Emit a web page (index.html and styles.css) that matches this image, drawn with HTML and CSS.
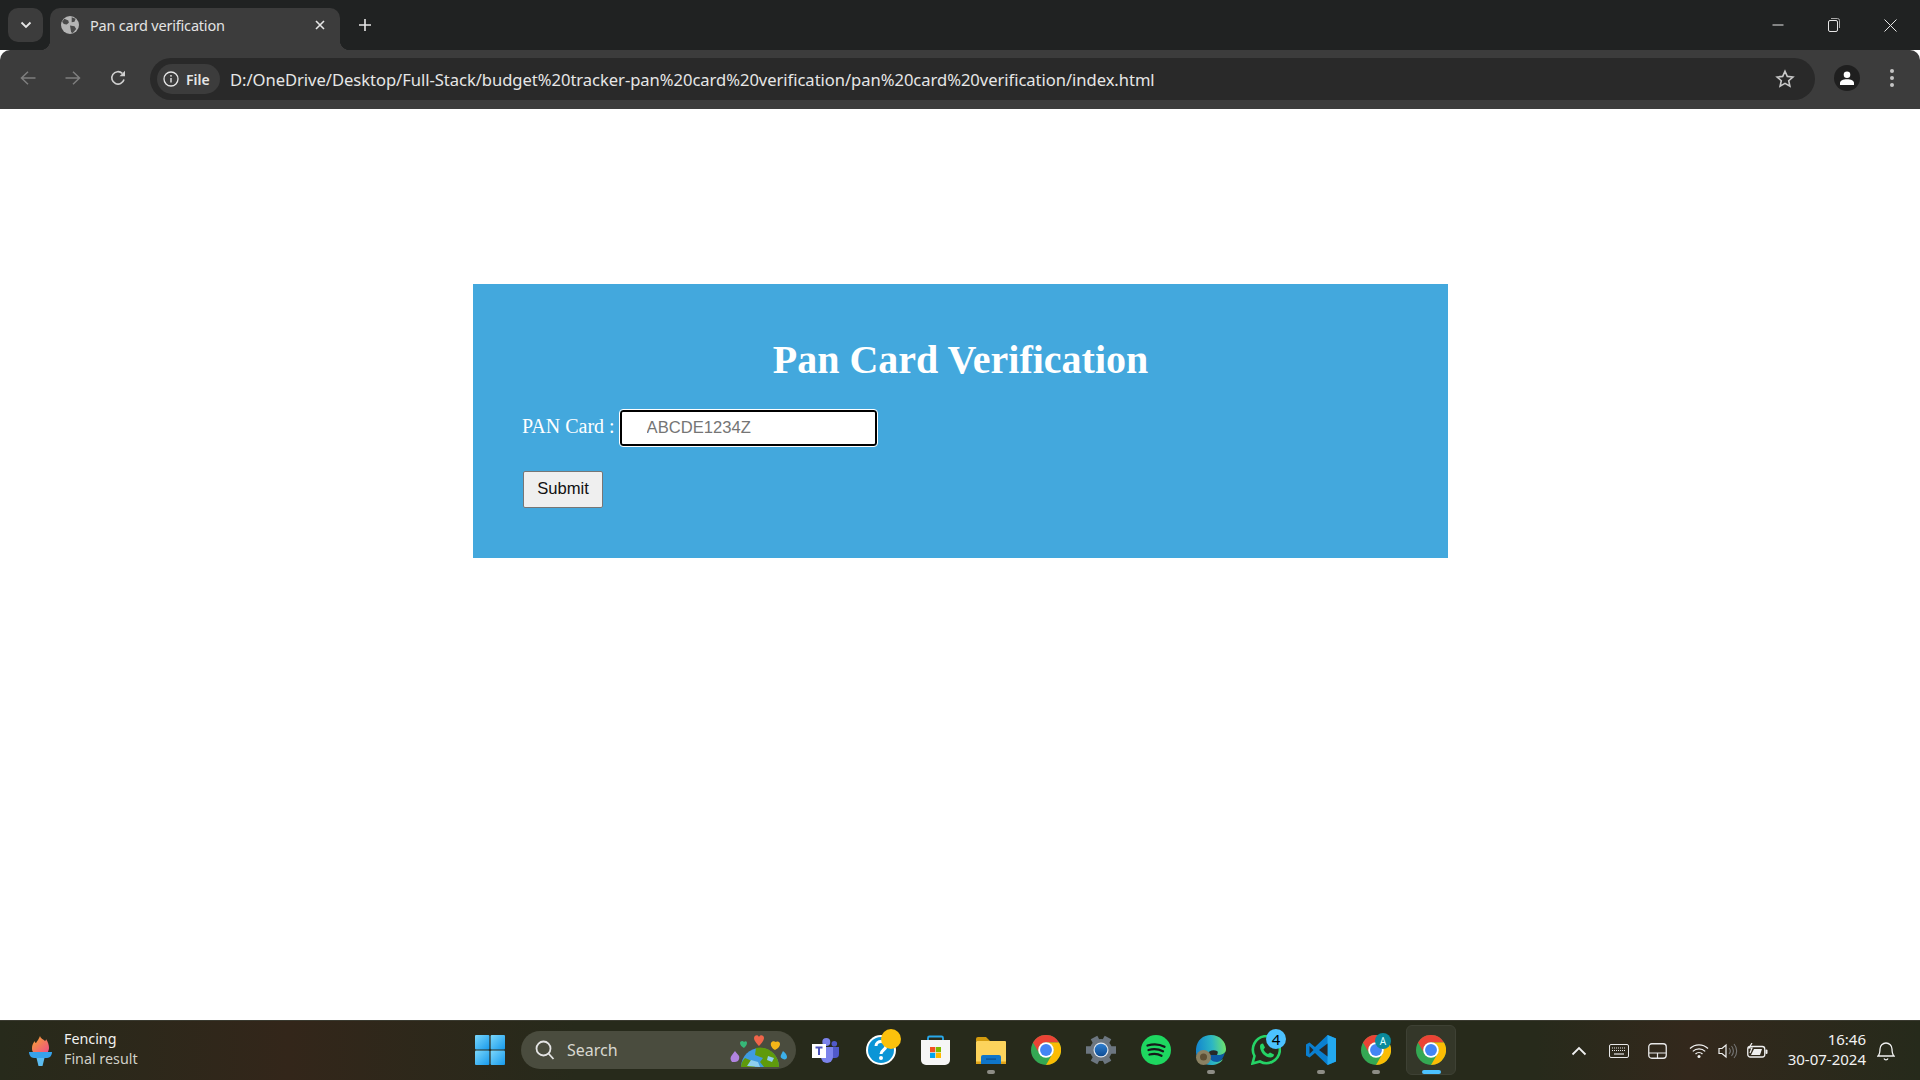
FILE: index.html
```html
<!DOCTYPE html>
<html lang="en">
<head>
<meta charset="utf-8">
<title>Pan card verification</title>
<link rel="stylesheet" href="styles.css">
</head>
<body>
<svg class="defs" width="0" height="0" aria-hidden="true">
  <defs>
    <linearGradient id="flame" x1="0" y1="0" x2="1" y2="1"><stop offset="0" stop-color="#f7a92c"/><stop offset="1" stop-color="#ef4f86"/></linearGradient>
    <linearGradient id="edgeg" x1="0" y1="0.5" x2="1" y2="0.4"><stop offset="0" stop-color="#1283cf"/><stop offset=".55" stop-color="#2cb6c4"/><stop offset="1" stop-color="#6ee46c"/></linearGradient>
    <linearGradient id="winl" x1="0" y1="0" x2="1" y2="1"><stop offset="0" stop-color="#7bd7fb"/><stop offset="1" stop-color="#179aed"/></linearGradient>
    <linearGradient id="hub" x1="0" y1="0" x2="0" y2="1"><stop offset="0" stop-color="#2f7fd0"/><stop offset="1" stop-color="#0d4c94"/></linearGradient>
  </defs>
  <symbol id="chrome" viewBox="0 0 48 48">
    <circle cx="24" cy="24" r="24" fill="#34a853"/>
    <path d="M3.200 12A24 24 0 0 1 44.800 12H24A12 12 0 0 0 13.600 30z" fill="#ea4335"/>
    <path d="M44.800 12A24 24 0 0 1 24 48L34.400 30A12 12 0 0 0 24 12z" fill="#fbbc04"/>
    <circle cx="24" cy="24" r="12.500" fill="#fff"/>
    <circle cx="24" cy="24" r="9.500" fill="#4285f4"/>
  </symbol>
</svg>

<header class="tabstrip">
  <button class="tab-menu" type="button">
    <svg width="12" height="12" viewBox="0 0 12 12"><path d="M1.500 3.500 6 8l4.500-4.500" fill="none" stroke="#e6e6e6" stroke-width="1.800"/></svg>
  </button>
  <div class="tab">
    <svg class="tab-globe" width="18" height="18" viewBox="0 0 16 16"><circle cx="8" cy="8" r="8" fill="#b5b5b5"/><path d="M3 2.500 6.500 4 7 6 5 7.500 2.500 7 1 5zM9.500 1 13 2.500 12 5l-2.500.5zM8 8.500l4 .5 1.500 2.500-3 3.500-1.500-.5-.5-3z" fill="#4a4a4a"/></svg>
    <span class="tab-title">Pan card verification</span>
    <svg class="tab-close" width="12" height="12" viewBox="0 0 12 12"><path d="M2 2l8 8M10 2l-8 8" stroke="#e6e6e6" stroke-width="1.600"/></svg>
  </div>
  <svg class="tab-new" width="14" height="14" viewBox="0 0 14 14"><path d="M7 1v12M1 7h12" stroke="#e6e6e6" stroke-width="1.600"/></svg>
  <div class="window-controls">
    <svg width="12" height="12" viewBox="0 0 12 12"><path d="M.5 6h11" stroke="#e6e6e6"/></svg>
    <svg width="12" height="14" viewBox="0 0 12 14"><rect x=".5" y="2.500" width="9" height="11" rx="1.500" fill="none" stroke="#e6e6e6"/><path d="M3 .5h6.500a2 2 0 0 1 2 2V10" fill="none" stroke="#a8a8a8"/></svg>
    <svg width="13" height="13" viewBox="0 0 13 13"><path d="M.5.500l12 12M12.500.500l-12 12" stroke="#e6e6e6"/></svg>
  </div>
</header>

<nav class="toolbar">
  <svg class="nav-icon" width="16" height="16" viewBox="0 0 16 16"><path d="M15.500 8H1.500M8 1.800 1.500 8 8 14.200" fill="none" stroke="#7e7e7e" stroke-width="1.500"/></svg>
  <svg class="nav-icon" width="16" height="16" viewBox="0 0 16 16"><path d="M.5 8h14M8 1.800 14.500 8 8 14.200" fill="none" stroke="#7e7e7e" stroke-width="1.500"/></svg>
  <svg class="nav-icon" width="16" height="16" viewBox="0 0 16 16"><path d="M14 9.500A6.200 6.200 0 1 1 12.300 3.400" fill="none" stroke="#d0d0d0" stroke-width="1.600"/><path d="M15 .8v5.500H9.500z" fill="#d0d0d0"/></svg>
  <div class="omnibox">
    <div class="chip">
      <svg width="16" height="16" viewBox="0 0 16 16"><circle cx="8" cy="8" r="7" fill="none" stroke="#e6e6e6" stroke-width="1.300"/><path d="M8 7v4.500" stroke="#e6e6e6" stroke-width="1.400"/><circle cx="8" cy="4.800" r=".9" fill="#e6e6e6"/></svg>
      <span class="chip-label">File</span>
    </div>
    <span class="url">D:/OneDrive/Desktop/Full-Stack/budget%20tracker-pan%20card%20verification/pan%20card%20verification/index.html</span>
    <svg class="star" width="20" height="20" viewBox="0 0 20 20"><path d="M10 2.200l2.300 5.200 5.600.6-4.200 3.700 1.200 5.500L10 14.400 5.100 17.200l1.200-5.500L2.100 8l5.600-.6z" fill="none" stroke="#c8c8c8" stroke-width="1.600"/></svg>
  </div>
  <div class="avatar">
    <svg width="14" height="14" viewBox="0 0 14 14"><circle cx="7" cy="3.800" r="3.300" fill="#fff"/><path d="M0 14v-2c0-2.500 3-3.800 7-3.800s7 1.300 7 3.800v2z" fill="#fff"/></svg>
  </div>
  <div class="kebab"><i></i><i></i><i></i></div>
</nav>

<main class="page">
  <section class="card">
    <h1 class="card-title">Pan Card Verification</h1>
    <form class="card-form">
      <div class="field">
        <label class="field-label" for="pan">PAN Card :</label>
        <input class="field-input" id="pan" type="text" placeholder="ABCDE1234Z">
      </div>
      <button class="submit" type="button">Submit</button>
    </form>
  </section>
</main>

<footer class="taskbar">
  <div class="widget">
    <svg width="23" height="30" viewBox="0 0 23 30">
      <path d="M11 0c1 3 3 3 5 5 1-1 1-1 1-2 2 3 3 6 3 9 0 2-1 3-1 4H4c-1-1-1-3-1-4 0-3 1-5 3-7 0 1 0 2 1 2 1-2 3-4 4-7z" fill="url(#flame)"/>
      <path d="M0 16h23c0 3-2 6-5 6H5c-3 0-5-3-5-6z" fill="#36a2ec"/>
      <path d="M7.500 22h8L13.500 30h-4z" fill="#5cbcf0"/>
    </svg>
    <div class="widget-text"><span class="widget-title">Fencing</span><span class="widget-sub">Final result</span></div>
  </div>
  <div class="center">
    <div class="slot slot-win">
      <svg width="30" height="30" viewBox="0 0 30 30"><rect x="0" y="0" width="14.400" height="14.400" rx="1" fill="url(#winl)"/><rect x="15.600" y="0" width="14.400" height="14.400" rx="1" fill="url(#winl)"/><rect x="0" y="15.600" width="14.400" height="14.400" rx="1" fill="url(#winl)"/><rect x="15.600" y="15.600" width="14.400" height="14.400" rx="1" fill="url(#winl)"/></svg>
    </div>
    <div class="search">
      <svg width="22" height="22" viewBox="0 0 22 22"><circle cx="9.500" cy="9.500" r="7" fill="none" stroke="#e4e4e4" stroke-width="1.800"/><path d="M14.500 14.500l5 5.500" stroke="#e4e4e4" stroke-width="1.800"/></svg>
      <span class="search-text">Search</span>
      <svg class="search-art" width="60" height="36" viewBox="0 0 60 36">
        <path d="M11 34a19 19 0 0 1 38 0z" fill="#3f9be0"/>
        <path d="M26 15a19 19 0 0 1 23 19H34l-4-5 3-4-8-3zM11 34c0-4 2-7 4-9l7 3 3 6z" fill="#5f9a0c"/>
        <path d="M17 33l4-6 7 2 2 5zM38 23l6 2-2 4-5-2z" fill="#8fd0f0"/>
        <path d="M29 13c-1-1-5-5-5-8 0-3 4-4 5-1 1-3 5-2 5 1 0 3-4 7-5 8z" fill="#f0654a"/>
        <path d="M14 15c-2-1-4-3-4-5 0-2 3-3 4-1 1-1 3-1 3 1 0 2-2 4-3 5z" fill="#37b878"/>
        <path d="M45 17c-2-1-5-4-4-7 1-2 3-2 5-1 2-1 4 0 4 2 0 3-3 5-5 6z" fill="#f5b618"/>
        <path d="M2 29c-2-2-2-5 0-7l3-4c1 2 3 3 4 5 1 3-1 6-4 6z" fill="#b184e0"/>
        <path d="M53 18c1 1 4 3 4 6 0 2-2 3-4 2s-3-2-2-4z" fill="#3cb0ea"/>
      </svg>
    </div>
    <div class="apps">
      <div class="slot">
        <svg width="28" height="25" viewBox="0 0 28 25"><circle cx="14.300" cy="4" r="4" fill="#7b83eb"/><circle cx="22.300" cy="5.700" r="2.800" fill="#5059c9"/><path d="M19 9h8v7a4 4 0 0 1-4 4h-4z" fill="#5059c9"/><path d="M9 9h12v10a5.500 5.500 0 0 1-12 0z" fill="#7b83eb"/><rect x="0" y="6" width="14" height="14" fill="#fff"/><path d="M3.500 9.500h7M7 9.500V17" stroke="#4b53bc" stroke-width="2"/></svg>
      </div>
      <div class="slot">
        <svg width="30" height="30" viewBox="0 0 30 30"><circle cx="15" cy="15" r="15" fill="#fff"/><circle cx="15" cy="15" r="13" fill="#0b95d6"/><path d="M10 11c0-6 10-6 10 0 0 4-5 4-5 8" fill="none" stroke="#fff" stroke-width="3"/><circle cx="15" cy="23" r="2" fill="#fff"/></svg>
        <span class="badge badge-amber"></span>
      </div>
      <div class="slot">
        <svg width="29" height="30" viewBox="0 0 29 30"><path d="M7 6V3a1.500 1.500 0 0 1 1.500-1.500h12A1.500 1.500 0 0 1 22 3v3" fill="none" stroke="#28a8ea" stroke-width="1.800"/><path d="M0 5h29v20a5 5 0 0 1-5 5H5a5 5 0 0 1-5-5z" fill="#f6f6f6"/><rect x="9" y="12" width="5.200" height="5.200" fill="#f25022"/><rect x="14.800" y="12" width="5.200" height="5.200" fill="#7fba00"/><rect x="9" y="17.800" width="5.200" height="5.200" fill="#00a4ef"/><rect x="14.800" y="17.800" width="5.200" height="5.200" fill="#ffb900"/></svg>
      </div>
      <div class="slot slot-open">
        <svg width="30" height="27" viewBox="0 0 30 27"><path d="M0 2a2 2 0 0 1 2-2h8l4 4H0z" fill="#d39b0e"/><rect x="0" y="4" width="30" height="23" rx="1" fill="#fcd35c"/><rect x="0" y="24.500" width="30" height="2.500" fill="#e0a318"/><path d="M5 20a2 2 0 0 1 2-2h16a2 2 0 0 1 2 2v7H5z" fill="#0f75c9"/><rect x="10" y="21.500" width="10" height="1.200" fill="#0a4f8f"/></svg>
      </div>
      <div class="slot"><svg width="30" height="30"><use href="#chrome"/></svg></div>
      <div class="slot">
        <svg width="30" height="30" viewBox="0 0 30 30">
          <g stroke="#6c7680" stroke-width="7.500">
            <path d="M15 15H30"/><path d="M15 15H0"/>
            <path d="M15 15 22 2.500"/><path d="M15 15 8 2.500"/>
            <path d="M15 15 22 27.500"/><path d="M15 15 8 27.500"/>
          </g>
          <circle cx="15" cy="15" r="11" fill="#6c7680"/>
          <circle cx="15" cy="15" r="7.500" fill="#dfe6ee"/>
          <circle cx="15" cy="15" r="6.300" fill="url(#hub)"/>
        </svg>
      </div>
      <div class="slot">
        <svg width="30" height="30" viewBox="0 0 30 30"><circle cx="15" cy="15" r="15" fill="#1ed760"/><path d="M6.500 10.500c6-1.800 12-1.400 17 1.300M7.500 15c5-1.400 10-1 14.500 1.300M8.500 19.500c4-1 8.500-.8 12 1.200" fill="none" stroke="#16181a" stroke-width="2.300" stroke-linecap="round"/></svg>
      </div>
      <div class="slot slot-open">
        <svg width="30" height="30" viewBox="0 0 30 30"><path d="M0 14C1 5 7 0 15 0c9 0 15 7 15 14 0 4-3 6-7 6H13c0 4 4 6 8 6 3 0 5-1 6-2-2 4-7 6-12 6C5 30-1 23 0 14z" fill="url(#edgeg)"/><path d="M13 20h10c3 0 5-1 6-3-1 5-4 10-8 10-5 0-8-3-8-7z" fill="#0c59a4"/><path d="M11 20c1-4 6-6 10-4 1 .5 1 2 0 4z" fill="#26292a"/><circle cx="7.500" cy="22.500" r="7.500" fill="#8a8163"/><circle cx="7.500" cy="22" r="3.500" fill="#5e4f34"/></svg>
      </div>
      <div class="slot">
        <svg width="30" height="30" viewBox="0 0 30 30"><path d="M1.500 28.500l2-7.500A13.500 13.500 0 1 1 9 26.500z" fill="none" stroke="#25d366" stroke-width="2.600"/><path d="M9 11.500c0-2 1-3 3-3l2 4-1.500 2c1 2 2.500 3.500 4.500 4.500l2-1.500 4 2c0 2-1.500 3-3.500 3C13.500 22.500 9 16.500 9 11.500z" fill="#25d366"/></svg>
        <span class="badge badge-blue">4</span>
      </div>
      <div class="slot slot-open">
        <svg width="30" height="30" viewBox="0 0 30 30"><path d="M21.500 0 9 12 3.500 7.500 0 9.500v11l3.500 2 5.500-4.500L21.500 30l8.500-3.500v-23z" fill="#0a7fd0"/><path d="M21.500 0 30 3.500v23L21.500 30z" fill="#23a9f0"/><path d="M21.500 8.500v13L13 15z" fill="#26292a"/><path d="M3.500 11v8L7.500 15z" fill="#26292a"/></svg>
      </div>
      <div class="slot slot-open">
        <svg width="30" height="30"><use href="#chrome"/></svg>
        <span class="profile-badge">A</span>
      </div>
      <div class="slot slot-active"><svg width="30" height="30"><use href="#chrome"/></svg></div>
    </div>
  </div>
  <div class="tray">
    <svg class="tray-chevron" width="16" height="10" viewBox="0 0 16 10"><path d="M1.500 8.500 8 2l6.500 6.500" fill="none" stroke="#f0f0f0" stroke-width="1.800"/></svg>
    <svg class="tray-kb" width="20" height="14" viewBox="0 0 20 14"><rect x=".5" y=".5" width="19" height="13" rx="1.500" fill="none" stroke="#e8e8e8"/><path d="M3 4h14M3 6.500h14" stroke="#e8e8e8" stroke-dasharray="1 1"/><path d="M5 10h10" stroke="#e8e8e8" stroke-width="1.200"/></svg>
    <svg class="tray-pad" width="19" height="16" viewBox="0 0 19 16"><rect x=".75" y=".75" width="17.500" height="14.500" rx="3" fill="none" stroke="#e8e8e8" stroke-width="1.300"/><path d="M1 10h17M9.500 10v5" stroke="#e8e8e8" stroke-width="1.200"/></svg>
    <svg class="tray-wifi" width="20" height="15" viewBox="0 0 20 15"><path d="M1 5.500a13 13 0 0 1 18 0M3.800 8.400a9 9 0 0 1 12.400 0M6.500 11a5 5 0 0 1 7 0" fill="none" stroke="#f0f0f0" stroke-width="1.300"/><circle cx="10" cy="13.500" r="1.500" fill="#f0f0f0"/></svg>
    <svg class="tray-vol" width="20" height="16" viewBox="0 0 20 16"><path d="M1 5.500h3L8 2v12l-4-3.500H1z" fill="none" stroke="#f0f0f0" stroke-width="1.200"/><path d="M11 5a4.500 4.500 0 0 1 0 6M13.500 3a7.500 7.500 0 0 1 0 10M16 1a10.500 10.500 0 0 1 0 14" fill="none" stroke="#777" stroke-width="1.100"/></svg>
    <svg class="tray-bat" width="21" height="16" viewBox="0 0 21 16"><rect x=".75" y="3.500" width="17" height="10.500" rx="2.500" fill="none" stroke="#f0f0f0" stroke-width="1.300"/><rect x="18.500" y="6.500" width="2" height="4.500" rx="1" fill="#f0f0f0"/><path d="M4 12h9l2-6H7z" fill="#f0f0f0"/><path d="M5 0 2 5h3L3 10" fill="none" stroke="#f0f0f0" stroke-width="1.200"/></svg>
    <div class="clock"><span>16:46</span><span>30-07-2024</span></div>
    <svg class="tray-bell" width="18" height="20" viewBox="0 0 18 20"><path d="M1 15c2-2 2-4 2-7a6 6 0 0 1 12 0c0 3 0 5 2 7z" fill="none" stroke="#f0f0f0" stroke-width="1.300"/><path d="M7 17.500a2.200 2.200 0 0 0 4 0" fill="none" stroke="#f0f0f0" stroke-width="1.300"/></svg>
  </div>
</footer>
</body>
</html>
```

FILE: styles.css
```css
* { box-sizing: border-box; }
html, body { margin: 0; height: 100%; }
body {
  display: flex;
  flex-direction: column;
  height: 1080px;
  overflow: hidden;
  background: #fff;
  font-family: "Noto Sans", "Open Sans", sans-serif;
}
.defs { position: absolute; }

/* Tab strip */
.tabstrip {
  height: 50px;
  flex: none;
  display: flex;
  align-items: flex-start;
  background: #202222;
  padding: 8px 0 0 8px;
}
.tab-menu {
  width: 35px;
  height: 34px;
  margin: 0 7px 0 0;
  padding: 0;
  border: 0;
  border-radius: 10px;
  background: #3c3c3c;
  display: flex;
  align-items: center;
  justify-content: center;
}
.tab {
  position: relative;
  width: 290px;
  height: 42px;
  padding: 0 14px 8px 11px;
  display: flex;
  align-items: center;
  background: #3c3c3c;
  border-radius: 10px 10px 0 0;
  color: #e3e3e3;
}
.tab::before,
.tab::after {
  content: "";
  position: absolute;
  bottom: 0;
  width: 10px;
  height: 10px;
}
.tab::before { left: -10px; background: radial-gradient(circle at 0 0, transparent 10px, #3c3c3c 10.500px); }
.tab::after { right: -10px; background: radial-gradient(circle at 100% 0, transparent 10px, #3c3c3c 10.500px); }
.tab-title { margin-left: 11px; flex: 1; font-size: 14.500px; letter-spacing: -0.200px; white-space: nowrap; }
.tab-new { margin: 10px 0 0 18px; }
.window-controls {
  margin-left: auto;
  height: 34px;
  display: flex;
  align-items: center;
  gap: 44px;
  padding-right: 23px;
}

/* Toolbar */
.toolbar {
  height: 59px;
  flex: none;
  display: flex;
  align-items: center;
  background: #3c3c3c;
  border-radius: 10px 10px 0 0;
  padding: 0 0 0 20px;
  position: relative;
}
.nav-icon { margin: -3px 29px 0 0; }
.nav-icon:nth-of-type(3) { margin-right: 24px; }
.omnibox {
  width: 1665px;
  height: 42px;
  margin-top: -1px;
  padding: 0 20px 0 7px;
  display: flex;
  align-items: center;
  background: #292929;
  border-radius: 21px;
  flex: none;
}
.chip {
  height: 30px;
  width: 63px;
  margin-right: 10px;
  display: flex;
  align-items: center;
  gap: 7px;
  padding-left: 6px;
  background: #3c3c3c;
  border-radius: 15px;
  color: #e6e6e6;
  flex: none;
}
.chip-label { font-size: 14px; font-weight: 600; }
.url { color: #e6e6e6; font-size: 16.600px; flex: 1; letter-spacing: -0.050px; white-space: nowrap; }
.avatar {
  width: 26px;
  height: 26px;
  margin: -3px 0 0 19px;
  border-radius: 50%;
  background: #1f1f1f;
  display: flex;
  align-items: center;
  justify-content: center;
  flex: none;
}
.kebab {
  margin: -3px 0 0 30px;
  display: flex;
  flex-direction: column;
  gap: 3px;
  flex: none;
}
.kebab i { width: 4px; height: 4px; border-radius: 50%; background: #c4c4c4; display: block; }

/* Page */
.page { flex: 1; min-height: 0; padding-top: 175px; }
.card {
  width: 975px;
  height: 274px;
  margin: 0 0 0 473px;
  padding: 53px 50px 0;
  background: #43a8dd;
  font-family: "Liberation Serif", serif;
  color: #fff;
}
.card-title {
  margin: 0 0 27px;
  text-align: center;
  font-size: 40px;
  line-height: 46px;
  font-weight: 700;
}
.field { display: flex; align-items: center; gap: 5px; margin-left: -1px; }
.field-label { font-size: 20px; line-height: 23px; margin-top: -3px; }
.field-input {
  width: 257px;
  height: 36px;
  padding: 0 0 0 25px;
  border: 2px solid #000;
  border-radius: 3px;
  outline: 1px solid #fff;
  outline-offset: 0;
  background: #fff;
  font-family: "Liberation Sans", sans-serif;
  font-size: 16.600px;
}
.field-input::placeholder { color: #757575; opacity: 1; }
.submit {
  display: block;
  width: 80px;
  height: 37px;
  margin-top: 25px;
  padding: 0 0 2px;
  background: #efefef;
  border: 1px solid #767676;
  border-radius: 2px;
  font-family: "Liberation Sans", sans-serif;
  font-size: 16.600px;
  color: #111;
}

/* Taskbar */
.taskbar {
  height: 60px;
  flex: none;
  display: flex;
  align-items: center;
  border-top: 1px solid #3a3a30;
  background: linear-gradient(90deg, #272a1b 0, #33261a 15%, #272a1b 30%, #272a1b 80%, #33281c 88%, #262a1b 100%);
  color: #f2f2f2;
}
.widget { width: 467px; padding-left: 29px; display: flex; align-items: center; gap: 12px; flex: none; }
.widget-text { display: flex; flex-direction: column; font-size: 14.300px; line-height: 20px; margin-top: -3px; }
.widget-sub { color: #d0d0c8; }
.center { display: flex; align-items: center; margin-top: -1px; }
.slot {
  width: 55px;
  height: 50px;
  position: relative;
  display: flex;
  align-items: center;
  justify-content: center;
  flex: none;
}
.slot-win { width: 45px; }
.slot-open::after {
  content: "";
  position: absolute;
  left: 24px;
  bottom: 1px;
  width: 8px;
  height: 4px;
  border-radius: 2px;
  background: #8d8d86;
}
.slot-active {
  width: 50px;
  margin: 0 2.500px;
  background: #343729;
  border-radius: 6px;
  border: 1px solid #3e4134;
}
.slot-active::after {
  content: "";
  position: absolute;
  left: 15px;
  bottom: 0;
  width: 19px;
  height: 4px;
  border-radius: 2px;
  background: #4cc2ff;
}
.search {
  width: 275px;
  height: 38px;
  margin-left: 9px;
  padding: 0 6px 0 13px;
  display: flex;
  align-items: center;
  background: #4a4c3e;
  border-radius: 19px;
  flex: none;
}
.search-text { margin-left: 11px; flex: 1; font-size: 16px; color: #d8d8d0; }
.search-art { align-self: flex-end; }
.apps { display: flex; align-items: center; margin-left: 2px; }
.badge {
  position: absolute;
  left: 28px;
  top: 4px;
  width: 20px;
  height: 20px;
  border-radius: 50%;
  text-align: center;
  font-size: 15px;
  line-height: 20px;
  color: #000;
}
.badge-amber { background: #fcc10c; }
.badge-blue { background: #4cc2ff; }
.profile-badge {
  position: absolute;
  left: 27px;
  top: 8px;
  width: 16px;
  height: 16px;
  border-radius: 50%;
  background: #0a8a9c;
  color: #dff;
  text-align: center;
  font-size: 10px;
  line-height: 16px;
}
.tray { margin-left: auto; display: flex; align-items: center; padding-right: 25px; }
.tray-chevron { margin-right: 22px; }
.tray-kb { margin-right: 19px; }
.tray-pad { margin-right: 22px; }
.tray-wifi { margin-right: 9px; }
.tray-vol { margin-right: 9px; }
.tray-bat { margin-right: 20px; }
.clock { display: flex; flex-direction: column; align-items: flex-end; font-size: 15px; line-height: 20px; margin-right: 11px; margin-top: -3px; }
```
